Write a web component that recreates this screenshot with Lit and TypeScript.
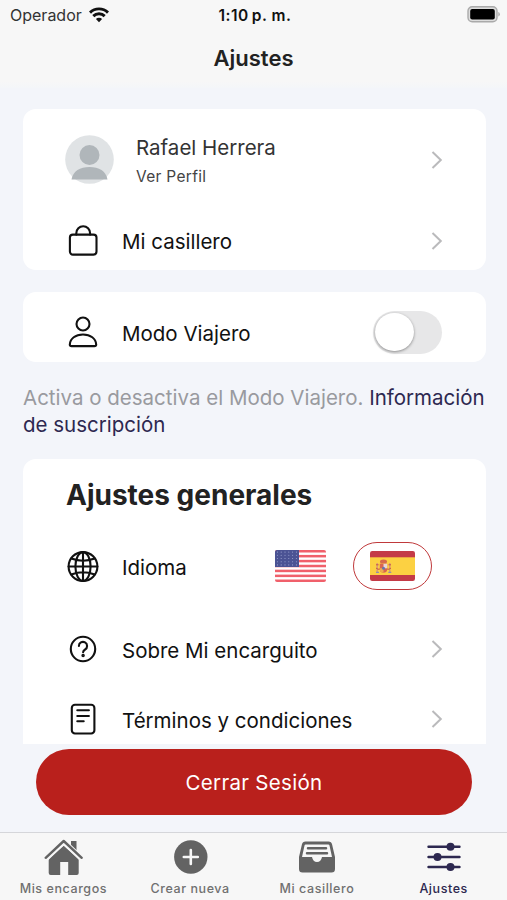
import { LitElement, html, css, svg } from "lit";
import { customElement, property } from "lit/decorators.js";

const icons: Record<string, unknown> = {
  bag: svg`<rect x="2.9" y="9.6" width="26.6" height="20" rx="3"/><path d="M9.3 9.6V8.200a6.900 6.900 0 0 1 13.800 0v1.400"/>`,
  person: svg`<circle cx="16" cy="8" r="6.500"/><path d="M2.800 28.500C3.200 22.500 8.500 18.500 16 18.500s12.800 4 13.200 10q0 1.600-1.800 1.600H4.600q-1.800 0-1.800-1.600Z"/>`,
  globe: svg`<circle cx="16" cy="16.500" r="14.400"/><ellipse cx="16" cy="16.500" rx="7.600" ry="14.400"/><path d="M16 2.100v28.800M1.600 16.500h28.800M4.300 8.500q11.700 4.400 23.400 0M4.300 24.500q11.700-4.400 23.400 0"/>`,
  help: svg`<circle cx="16" cy="16" r="12.200"/><path d="M11.900 13a4.100 4.100 0 1 1 6.200 3.500c-1.500.9-2 1.500-2 2.800"/><circle cx="16.100" cy="22.600" r=".7" fill="#111"/>`,
  doc: svg`<rect x="4.800" y="1.700" width="22.600" height="28.800" rx="3.200"/><path d="M10.300 7.300h11.600M10.300 13h11.600M10.300 18.300h6.400"/>`,
};

const chevron = html`<svg class="chevron" width="14" height="20" viewBox="0 0 14 20"><path d="M2.500 2 10.800 10 2.500 18" fill="none" stroke="#bababc" stroke-width="2"/></svg>`;

@customElement("setting-row")
class SettingRow extends LitElement {
  @property() icon = "";
  @property() label = "";
  static styles = css`
    :host { display: flex; align-items: center; flex: none; padding: 0 42px 0 44px; box-sizing: border-box; }
    .icon { width: 32px; height: 32px; fill: none; stroke: #111; stroke-width: 2.100; stroke-linecap: round; stroke-linejoin: round; flex: none; }
    .label { margin: 2px 0 0 23px; flex: 1; font-size: 20.500px; letter-spacing: 0; color: #111; white-space: nowrap; }
  `;
  render() {
    return html`<svg class="icon" viewBox="0 0 32 32">${icons[this.icon]}</svg>
      <span class="label">${this.label}</span><slot>${chevron}</slot>`;
  }
}

@customElement("app-root")
class AppRoot extends LitElement {
  static styles = css`
    :host { display: flex; flex-direction: column; width: 507px; height: 900px; overflow: hidden; background: #f3f5fa; font-family: Inter, "Liberation Sans", sans-serif; color: #222; }
    * { box-sizing: border-box; }
    .top { height: 88px; flex: none; background: linear-gradient(#f7f7f7 92%, #f4f6f9); }
    .status { display: grid; grid-template-columns: 1fr auto 1fr; align-items: center; height: 30px; padding: 0 7px 0 10px; }
    .carrier { display: flex; align-items: center; gap: 7px; font-size: 16px; color: #333; }
    .time { font-size: 15.500px; font-weight: 600; color: #111; letter-spacing: .5px; white-space: nowrap; }
    .battery { justify-self: end; margin-bottom: 2px; }
    .title { margin: 0; height: 56px; line-height: 56px; text-align: center; font-size: 22px; font-weight: 600; }
    .scroll { height: 656px; flex: none; overflow: hidden; padding: 21px 21px 0 23px; }
    .card { background: #fff; border-radius: 13px; display: flex; flex-direction: column; }
    .account { height: 161px; }
    .profile { height: 102px; padding: 0 42px 0 42px; display: flex; align-items: center; }
    .avatar { margin-bottom: 1px; }
    .who { margin-left: 22px; flex: 1; }
    .name { font-size: 20.500px; line-height: 26px; color: #333; }
    .sub { font-size: 15.500px; line-height: 20px; margin: 6px 0 -1px; letter-spacing: .3px; color: #444; }
    .h59 { height: 59px; }
    .h70 { height: 70px; }
    .traveler { margin-top: 22px; height: 70px; padding-top: 5px; }
    .switch { width: 69px; height: 43px; border-radius: 22px; background: #e7e7e8; padding: 2px; display: flex; margin-right: 2px; }
    .knob { width: 38.500px; height: 38.500px; border-radius: 50%; background: #fff; box-shadow: 0 1px 3px rgba(0,0,0,.4); }
    .note { margin: 22px -10px 0 0; font-size: 20.500px; line-height: 27px; color: #999a9f; white-space: nowrap; }
    .note a { color: #2d2850; }
    .general { margin-top: 21px; height: 310px; }
    .heading { margin: 0; height: 72px; line-height: 73px; padding-left: 43px; font-size: 28px; font-weight: 700; letter-spacing: 0; flex: none; }
    .flags { display: flex; align-items: center; gap: 27px; margin-right: 12px; }
    .pick { width: 79px; height: 48px; border: 1.900px solid #c0393b; border-radius: 24px; display: flex; align-items: center; justify-content: center; }
    .gap { margin-top: 13px; }
    .logout { margin: 5px 35px 0 36px; height: 66px; flex: none; border: 0; border-radius: 33px; background: #b9201c; color: #fff; font: 20.500px Inter, sans-serif; letter-spacing: .3px; }
    .tabs { margin-top: 17px; height: 68px; flex: none; display: grid; grid-template-columns: repeat(4, 1fr); border-top: 1px solid #d5d6da; background: #f7f7f7; }
    .tab { display: flex; flex-direction: column; align-items: center; padding-top: 4px; font-size: 12.500px; font-weight: 500; letter-spacing: .57px; color: #707070; }
    .tab svg { width: 40px; height: 40px; display: block; }
    .tab span { line-height: 16px; margin-top: 4px; }
    .tab.on { color: #2d2850; }
    svg { flex: none; }
  `;

  private usFlag() {
    return html`<svg width="51" height="32" viewBox="0 0 51 32">
      <defs><clipPath id="us"><rect width="51" height="32" rx="2"/></clipPath></defs>
      <g clip-path="url(#us)"><rect width="51" height="32" fill="#fff"/>
      ${[0, 1, 2, 3, 4, 5, 6].map(i => svg`<rect y=${i * 4.92} width="51" height="2.500" fill="#f0606b"/>`)}
      <rect width="24" height="17" fill="#4b5394"/>
      ${[0, 1, 2, 3, 4].map(r => [0, 1, 2, 3, 4, 5].map(c => svg`<circle cx=${2.4 + c * 3.8} cy=${2.1 + r * 3.2} r=".55" fill="#9da5d2"/>`))}</g></svg>`;
  }

  private esFlag() {
    return html`<svg width="45" height="30" viewBox="0 0 45 30">
      <defs><clipPath id="es"><rect width="45" height="30" rx="2.200"/></clipPath></defs>
      <g clip-path="url(#es)"><rect width="45" height="30" fill="#c43b47"/><rect y="6.300" width="45" height="17.700" fill="#fcd142"/></g>
      <path d="M7.200 12v9M19.800 12v9" stroke="#d99b76" stroke-width="1.500"/>
      <path d="M6 13.800h2.600M18.500 13.800H21M6 17q2 2 4 1M21 17q-2 2-4 1" stroke="#c65548" fill="none"/>
      <path d="M6 21.300h3M18.300 21.300h3" stroke="#918dae" stroke-width="1.300"/>
      <path d="M10 11q-.5-2.600 3.500-2.600T17 11l-.8 1.500h-5.400Z" fill="#d76a4b"/>
      <path d="M9.800 12.800h7.400v5.700q-.4 3.200-3.700 3.200t-3.700-3.200Z" fill="#d96550"/>
      <path d="M13.500 12.800h3.700v4.500h-3.700Z" fill="#ead7d5"/><path d="M9.800 17.300h3.700v4.200q-3.500 0-3.700-3.200Z" fill="#edae4e"/>
      <circle cx="13.500" cy="17.200" r="1.500" fill="#6475ad"/></svg>`;
  }

  render() {
    return html`
      <header class="top">
        <div class="status">
          <div class="carrier"><span>Operador</span>
            <svg width="20" height="16" viewBox="0 0 20 16" fill="none" stroke="#111" stroke-width="2.900"><path d="M1 5.600a12.800 12.800 0 0 1 18 0M4.300 9.100a8.100 8.100 0 0 1 11.400 0"/><path d="M10 15.200 6.900 12.100a4.400 4.400 0 0 1 6.200 0Z" fill="#111" stroke="none"/></svg>
          </div>
          <div class="time">1:10&#8201;p. m.</div>
          <svg class="battery" width="33" height="18" viewBox="0 0 33 18"><rect x="1" y="1.700" width="29" height="15" rx="4.200" fill="#ddd" stroke="#aaa" stroke-width="1.400"/><rect x="3.200" y="3.900" width="24.600" height="10.600" rx="2" fill="#000"/><path d="M31.300 7v4.500q1.500-.5 1.500-2.250T31.300 7" fill="#aaa"/></svg>
        </div>
        <h1 class="title">Ajustes</h1>
      </header>
      <main class="scroll">
        <section class="card account">
          <div class="profile">
            <svg class="avatar" width="49" height="49" viewBox="0 0 49 49"><circle cx="24.500" cy="24.500" r="24.300" fill="#e0e3e5"/><circle cx="24.500" cy="20" r="10" fill="#b0b6ba"/><path d="M6.500 44.500C8 36 15 32 24.500 32s16.500 4 18 12.500Z" fill="#b0b6ba"/></svg>
            <div class="who"><div class="name">Rafael Herrera</div><div class="sub">Ver Perfil</div></div>
            ${chevron}
          </div>
          <setting-row class="h59" icon="bag" label="Mi casillero"></setting-row>
        </section>
        <section class="card traveler">
          <setting-row class="h70" icon="person" label="Modo Viajero"><div class="switch"><div class="knob"></div></div></setting-row>
        </section>
        <p class="note">Activa o desactiva el Modo Viajero. <a>Información</a><br><a>de suscripción</a></p>
        <section class="card general">
          <h2 class="heading">Ajustes generales</h2>
          <setting-row class="h70" icon="globe" label="Idioma"><div class="flags">${this.usFlag()}<div class="pick">${this.esFlag()}</div></div></setting-row>
          <setting-row class="h70 gap" icon="help" label="Sobre Mi encarguito"></setting-row>
          <setting-row class="h70" icon="doc" label="Términos y condiciones"></setting-row>
        </section>
      </main>
      <button class="logout">Cerrar Sesión</button>
      <nav class="tabs">
        <div class="tab"><svg viewBox="0 0 40 40" fill="#636363"><path d="M28 4h5.500v12L28 10.700Z"/><path d="M20.700 8.700 35.700 22v14q0 2-2 2h-8.500V25h-8v13H7.700q-2 0-2-2V22Z"/><path d="M2.700 21.800 20.700 4.600l18 17.200" fill="none" stroke="#f7f7f7" stroke-width="5.400"/><path d="M2.700 20.800 20.700 4l18 16.800" fill="none" stroke="#636363" stroke-width="2.400" stroke-linecap="round" stroke-linejoin="round"/></svg><span>Mis encargos</span></div>
        <div class="tab"><svg viewBox="0 0 40 40"><circle cx="20.800" cy="20" r="16.700" fill="#636363"/><path d="M20.800 13v14M13.800 20h14" stroke="#f7f7f7" stroke-width="2.600" stroke-linecap="round"/></svg><span>Crear nueva</span></div>
        <div class="tab"><svg viewBox="0 0 40 40"><path d="M8.500 4.500h23q3 0 3.600 3L38 20v12q0 3.500-3.500 3.500h-29Q2 35.500 2 32V20L4.900 7.500q.6-3 3.600-3Z" fill="#636363"/><path d="M8.700 7.500h22.600q1 0 1.200 1L35 20H25q-1 5-5 5t-5-5H5L7.500 8.500q.2-1 1.200-1Z" fill="#f7f7f7"/><path d="M11 11.300h18M10 16.200h20" stroke="#636363" stroke-width="2.500" stroke-linecap="round"/></svg><span>Mi casillero</span></div>
        <div class="tab on"><svg viewBox="0 0 40 40" stroke="#2d2850" fill="#2d2850" stroke-width="2.400" stroke-linecap="round"><path d="M4.500 9.700h31M4.500 20h31M4.500 30h31"/><circle cx="26.500" cy="9.700" r="2.800"/><circle cx="13.500" cy="20" r="2.800"/><circle cx="26.500" cy="30" r="2.800"/></svg><span>Ajustes</span></div>
      </nav>`;
  }
}
